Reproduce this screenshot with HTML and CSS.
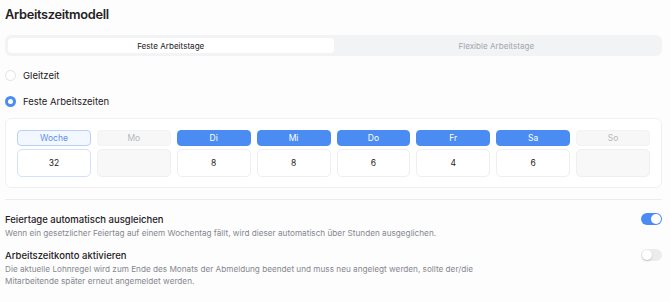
FILE: index.html
```html
<!DOCTYPE html>
<html lang="de">
<head>
    <meta charset="UTF-8">
    <title>Arbeitszeitmodell</title>
    <link rel="stylesheet" href="styles.css">
</head>
<body>
    <main class="page">
        <h1 class="page-title">Arbeitszeitmodell</h1>

        <div class="segmented">
            <button class="segment active">Feste Arbeitstage</button>
            <button class="segment">Flexible Arbeitstage</button>
        </div>

        <label class="radio-row">
            <span class="radio"></span>
            <span>Gleitzeit</span>
        </label>
        <label class="radio-row">
            <span class="radio checked"></span>
            <span>Feste Arbeitszeiten</span>
        </label>

        <section class="week-card">
            <div class="day week">
                <div class="day-label">Woche</div>
                <div class="day-value">32</div>
            </div>
            <div class="day off">
                <div class="day-label">Mo</div>
                <div class="day-value"></div>
            </div>
            <div class="day on">
                <div class="day-label">Di</div>
                <div class="day-value">8</div>
            </div>
            <div class="day on">
                <div class="day-label">Mi</div>
                <div class="day-value">8</div>
            </div>
            <div class="day on">
                <div class="day-label">Do</div>
                <div class="day-value">6</div>
            </div>
            <div class="day on">
                <div class="day-label">Fr</div>
                <div class="day-value">4</div>
            </div>
            <div class="day on">
                <div class="day-label">Sa</div>
                <div class="day-value">6</div>
            </div>
            <div class="day off">
                <div class="day-label">So</div>
                <div class="day-value"></div>
            </div>
        </section>

        <hr class="divider">

        <div class="setting">
            <div class="setting-text">
                <div class="setting-title">Feiertage automatisch ausgleichen</div>
                <p class="setting-desc">Wenn ein gesetzlicher Feiertag auf einem Wochentag fällt, wird dieser automatisch über Stunden ausgeglichen.</p>
            </div>
            <span class="toggle on"></span>
        </div>

        <div class="setting">
            <div class="setting-text">
                <div class="setting-title">Arbeitszeitkonto aktivieren</div>
                <p class="setting-desc">Die aktuelle Lohnregel wird zum Ende des Monats der Abmeldung beendet und muss neu angelegt werden, sollte der/die Mitarbeitende später erneut angemeldet werden.</p>
            </div>
            <span class="toggle"></span>
        </div>
    </main>
</body>
</html>
```

FILE: styles.css
```css
:root {
    --blue: #4b8cf2;
    --text: #1f2125;
    --muted: #85888e;
    --line: #ececee;
}

body {
    margin: 0;
    background: #fdfdfd;
    font-family: 'Inter', 'Noto Sans', sans-serif;
    color: var(--text);
}

.page {
    width: 657px;
    margin-left: 5px;
}

.page-title {
    margin: 0;
    padding-top: 5px;
    height: 19px;
    font-size: 12.8px;
    line-height: 19px;
    font-weight: 600;
    letter-spacing: -0.3px;
}

.segmented {
    display: flex;
    margin-top: 11px;
    padding: 3px;
    background: #f2f3f5;
    border-radius: 6px;
}

.segment {
    flex: 1;
    height: 15px;
    border: 0;
    border-radius: 4px;
    background: transparent;
    font-family: inherit;
    font-size: 8.1px;
    color: #a3a6ab;
    padding: 0;
}

.segment.active {
    background: white;
    color: var(--text);
}

.radio-row {
    display: flex;
    align-items: center;
    gap: 7px;
    height: 26px;
    font-size: 9.5px;
}

.radio-row:first-of-type {
    margin-top: 6px;
}

.radio {
    width: 9px;
    height: 9px;
    border: 1px solid #e2e3e6;
    border-radius: 50%;
    background: white;
}

.radio.checked {
    width: 5px;
    height: 5px;
    border: 3px solid var(--blue);
}

.week-card {
    display: grid;
    grid-template-columns: repeat(8, 1fr);
    gap: 6px;
    margin-top: 4px;
    padding: 11px 11px 10px;
    border: 1px solid #f0f0f2;
    border-radius: 6px;
    background: white;
}

.day-label {
    height: 14px;
    line-height: 14px;
    border: 1px solid transparent;
    border-radius: 4px;
    text-align: center;
    font-size: 8.5px;
}

.day-value {
    height: 26px;
    margin-top: 3px;
    line-height: 26px;
    border: 1px solid #efeff1;
    border-radius: 5px;
    text-align: center;
    font-size: 8.5px;
    background: white;
}

.week .day-label {
    background: #f3f7ff;
    border-color: #b8cff8;
    color: #5b8ff0;
}

.week .day-value {
    border-color: #d3e1fb;
}

.on .day-label {
    background: var(--blue);
    border-color: var(--blue);
    color: white;
}

.off .day-label {
    background: #f7f7f8;
    border-color: #f3f3f4;
    color: #b5b7bb;
}

.off .day-value {
    background: #f8f8f9;
}

.divider {
    margin: 11px 0 0;
    border: 0;
    border-top: 1px solid var(--line);
}

.setting {
    display: flex;
    justify-content: space-between;
    align-items: flex-start;
    margin-top: 13px;
}

.setting + .setting {
    margin-top: 10px;
}

.setting-title {
    font-size: 9.5px;
    line-height: 14px;
    font-weight: 500;
}

.setting-desc {
    margin: 0;
    max-width: 475px;
    font-size: 8.2px;
    line-height: 12px;
    color: var(--muted);
}

.toggle {
    position: relative;
    flex: none;
    width: 21px;
    height: 12px;
    border-radius: 6px;
    background: #ececee;
}

.toggle::after {
    content: "";
    position: absolute;
    top: 1px;
    left: 1px;
    width: 10px;
    height: 10px;
    border-radius: 50%;
    background: white;
    box-shadow: 0 1px 2px rgba(0,0,0,0.2);
}

.toggle.on {
    background: var(--blue);
}

.toggle.on::after {
    left: 10px;
    box-shadow: none;
}
```
